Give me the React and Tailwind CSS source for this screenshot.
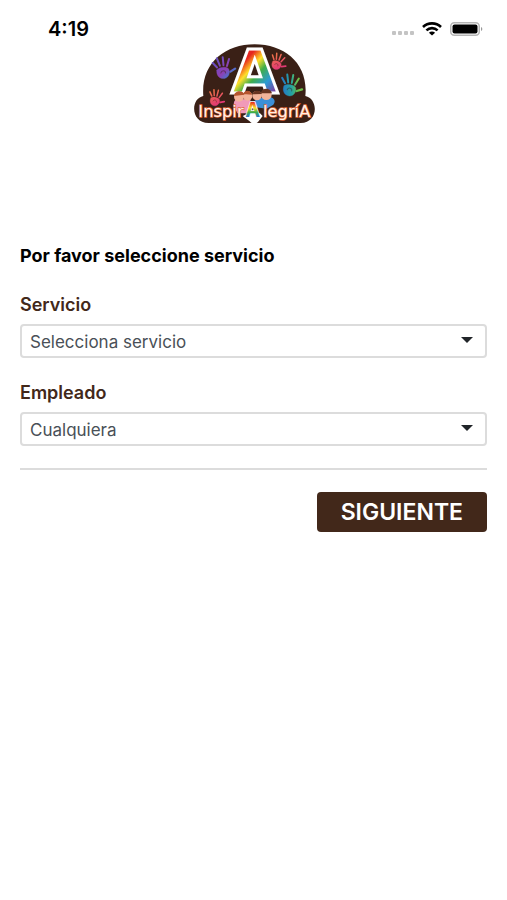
import { useState } from "react";

const SERVICES = ["Selecciona servicio"];
const EMPLOYEES = ["Cualquiera"];

function Hand({ x, y, scale, rotate, fill }) {
    return (
        <g transform={`translate(${x} ${y}) rotate(${rotate}) scale(${scale})`} stroke={fill} fill={fill} strokeLinecap="round">
            <path d="M-18 -6 C-12 -14 10 -15 17 -6 C22 4 17 20 2 22 C-14 22 -22 9 -18 -6Z" strokeWidth="1" />
            <path d="M-16 -14 L-27 -29" strokeWidth="6" fill="none" />
            <path d="M-7 -18 L-13 -41" strokeWidth="6" fill="none" />
            <path d="M4 -18 L5 -42" strokeWidth="6" fill="none" />
            <path d="M14 -14 L23 -34" strokeWidth="6" fill="none" />
            <path d="M22 4 L37 -3" strokeWidth="7" fill="none" />
            <path d="M-7 4 C-4 -5 8 -3 7 6" stroke="#3a2016" strokeWidth="3" fill="none" opacity="0.5" />
        </g>
    );
}

function Logo() {
    return (
        <svg viewBox="0 0 420 285" className="h-[95px] w-[140px]" role="img" aria-label="InspirAlegríA">
            <defs>
                <linearGradient id="rainbow" gradientUnits="userSpaceOnUse" x1="170" y1="60" x2="290" y2="170">
                    <stop offset="0.12" stopColor="#e5261f" />
                    <stop offset="0.2" stopColor="#f47b20" />
                    <stop offset="0.3" stopColor="#ffe02b" />
                    <stop offset="0.46" stopColor="#3fae49" />
                    <stop offset="0.68" stopColor="#2b9bd5" />
                    <stop offset="0.9" stopColor="#7b3fa0" />
                </linearGradient>
                <linearGradient id="smallRainbow" gradientUnits="userSpaceOnUse" x1="200" y1="198" x2="200" y2="242">
                    <stop offset="0" stopColor="#e5261f" />
                    <stop offset="0.4" stopColor="#ffe02b" />
                    <stop offset="0.7" stopColor="#3fae49" />
                    <stop offset="1" stopColor="#2b78c5" />
                </linearGradient>
                <linearGradient id="violet" gradientUnits="userSpaceOnUse" x1="-20" y1="-30" x2="20" y2="20">
                    <stop offset="0" stopColor="#6a4fc0" />
                    <stop offset="0.6" stopColor="#8e3fb5" />
                    <stop offset="1" stopColor="#3a7fd0" />
                </linearGradient>
                <linearGradient id="pink" gradientUnits="userSpaceOnUse" x1="-20" y1="-30" x2="20" y2="20">
                    <stop offset="0" stopColor="#f0704a" />
                    <stop offset="1" stopColor="#e0307a" />
                </linearGradient>
                <linearGradient id="teal" gradientUnits="userSpaceOnUse" x1="-20" y1="10" x2="25" y2="0">
                    <stop offset="0" stopColor="#2478c8" />
                    <stop offset="0.6" stopColor="#25a5a0" />
                    <stop offset="1" stopColor="#6cc04a" />
                </linearGradient>
            </defs>
            {/* badge */}
            <path
                d="M58 180 C50 85 120 25 212 25 C304 25 374 85 364 180 C404 188 404 261 350 261 H74 C20 261 18 188 58 180Z"
                fill="#3a2016"
            />
            <Hand x={117} y={106} scale={1} rotate={-8} fill="url(#violet)" />
            <Hand x={278} y={84} scale={0.75} rotate={18} fill="url(#pink)" />
            <Hand x={317} y={158} scale={1} rotate={8} fill="url(#teal)" />
            <Hand x={93} y={193} scale={0.75} rotate={12} fill="url(#pink)" />
            <text x="212" y="171" textAnchor="middle" fontFamily="DejaVu Sans" fontWeight="700" fontSize="182" fill="url(#rainbow)" stroke="#fff" strokeWidth="9">
                A
            </text>
            {/* children */}
            <path d="M150 210 C146 188 162 185 176 190 L198 188 L204 216 L186 232 H160Z" fill="#f19ab8" />
            <path d="M205 212 C206 188 228 186 246 184 C268 180 278 194 268 206 L248 218 L215 214Z" fill="#3b8fd8" />
            <circle cx="165" cy="182" r="15" fill="#f3b49a" />
            <circle cx="191" cy="180" r="14" fill="#f3b49a" />
            <circle cx="219" cy="179" r="14" fill="#f3b49a" />
            <circle cx="247" cy="176" r="16" fill="#f3b49a" />
            <path d="M150 180 C152 162 178 162 181 176Z M178 174 C182 161 200 161 204 176Z" fill="#b5552f" />
            <path d="M205 175 C208 161 230 161 233 174Z M231 171 C234 154 260 154 264 172Z" fill="#693521" />
            <text x="43" y="243" fontFamily="DejaVu Sans" fontSize="49" fill="#fff0e3" stroke="#e0683c" strokeWidth="4" paintOrder="stroke" textAnchor="start">
                Inspir
            </text>
            <text x="379" y="243" fontFamily="DejaVu Sans" fontSize="49" fill="#fff0e3" stroke="#e0683c" strokeWidth="4" paintOrder="stroke" textAnchor="end">
                legríA
            </text>
            <path d="M176 240 L194 232 L228 232 L236 240 L222 258 C214 265 204 265 197 256Z" fill="#fff" />
            <text x="206" y="242" textAnchor="middle" fontFamily="Inter" fontWeight="700" fontSize="60" fill="url(#smallRainbow)" stroke="#fff" strokeWidth="4" paintOrder="stroke">
                A
            </text>
        </svg>
    );
}

function StatusBar() {
    return (
        <div className="flex h-9 items-center justify-between pt-[22px] pr-6 pl-12">
            <span className="text-xl leading-5 font-semibold text-black">4:19</span>
            <div className="flex items-center gap-2">
                <svg viewBox="0 0 22 4" className="mt-2 h-1 w-[22px]" fill="#c4c4c4" aria-hidden="true">
                    <rect width="4" height="4" rx="1" />
                    <rect x="6" width="4" height="4" rx="1" />
                    <rect x="12" width="4" height="4" rx="1" />
                    <rect x="18" width="4" height="4" rx="1" />
                </svg>
                <svg viewBox="0 0 20 14" className="h-[14px] w-5" fill="none" stroke="#000" strokeWidth="2.6" aria-hidden="true">
                    <path d="M1 5 C6 0.2 14 0.2 19 5" />
                    <path d="M4.4 8.4 C7.6 5.4 12.4 5.4 15.6 8.4" />
                    <path d="M10 13.6 L6.9 10.7 C8.6 9.2 11.4 9.2 13.1 10.7Z" fill="#000" stroke="none" />
                </svg>
                <svg viewBox="0 0 33 14" className="h-[14px] w-[33px]" aria-hidden="true">
                    <rect x="0.75" y="0.75" width="28.5" height="12.5" rx="3.5" fill="#fff" stroke="#b5b5b5" strokeWidth="1.5" />
                    <rect x="2.5" y="2.5" width="25" height="9" rx="2" fill="#000" />
                    <path d="M31 5 C32.8 5.6 32.8 8.4 31 9Z" fill="#999" />
                </svg>
            </div>
        </div>
    );
}

function SelectField({ id, label, options, value, onChange }) {
    return (
        <div className="flex flex-col gap-[7px]">
            <label htmlFor={id} className="text-lg leading-6 font-semibold text-[#42281a]">{label}</label>
            <div className="relative">
                <select
                    id={id}
                    value={value}
                    onChange={(e) => onChange(e.target.value)}
                    className="block h-[34px] w-full appearance-none rounded-sm border-2 border-[#dcdcdc] bg-white px-2 pt-[3px] text-[17px] text-[#495057]"
                >
                    {options.map((option) => (
                        <option key={option}>{option}</option>
                    ))}
                </select>
                <svg viewBox="0 0 12 6" className="pointer-events-none absolute top-[13px] right-[14px] h-[6px] w-3" fill="#212529" aria-hidden="true">
                    <path d="M0 0 H12 L6 6Z" />
                </svg>
            </div>
        </div>
    );
}

export default function App() {
    const [service, setService] = useState(SERVICES[0]);
    const [employee, setEmployee] = useState(EMPLOYEES[0]);

    return (
        <div className="min-h-screen bg-white font-['Inter',sans-serif]">
            <StatusBar />
            <header className="flex justify-center">
                <Logo />
            </header>
            <form className="px-5 pt-[113px]" onSubmit={(e) => e.preventDefault()}>
                <h1 className="text-lg leading-6 font-bold text-black">Por favor seleccione servicio</h1>
                <div className="mt-[25px] flex flex-col gap-[23px]">
                    <SelectField id="servicio" label="Servicio" options={SERVICES} value={service} onChange={setService} />
                    <SelectField id="empleado" label="Empleado" options={EMPLOYEES} value={employee} onChange={setEmployee} />
                </div>
                <hr className="mt-[22px] border-t-2 border-[#dcdcdc]" />
                <div className="mt-[22px] flex justify-end">
                    <button type="submit" className="h-10 rounded-sm bg-[#42281a] px-6 text-[23px] font-semibold text-white">SIGUIENTE</button>
                </div>
            </form>
        </div>
    );
}
